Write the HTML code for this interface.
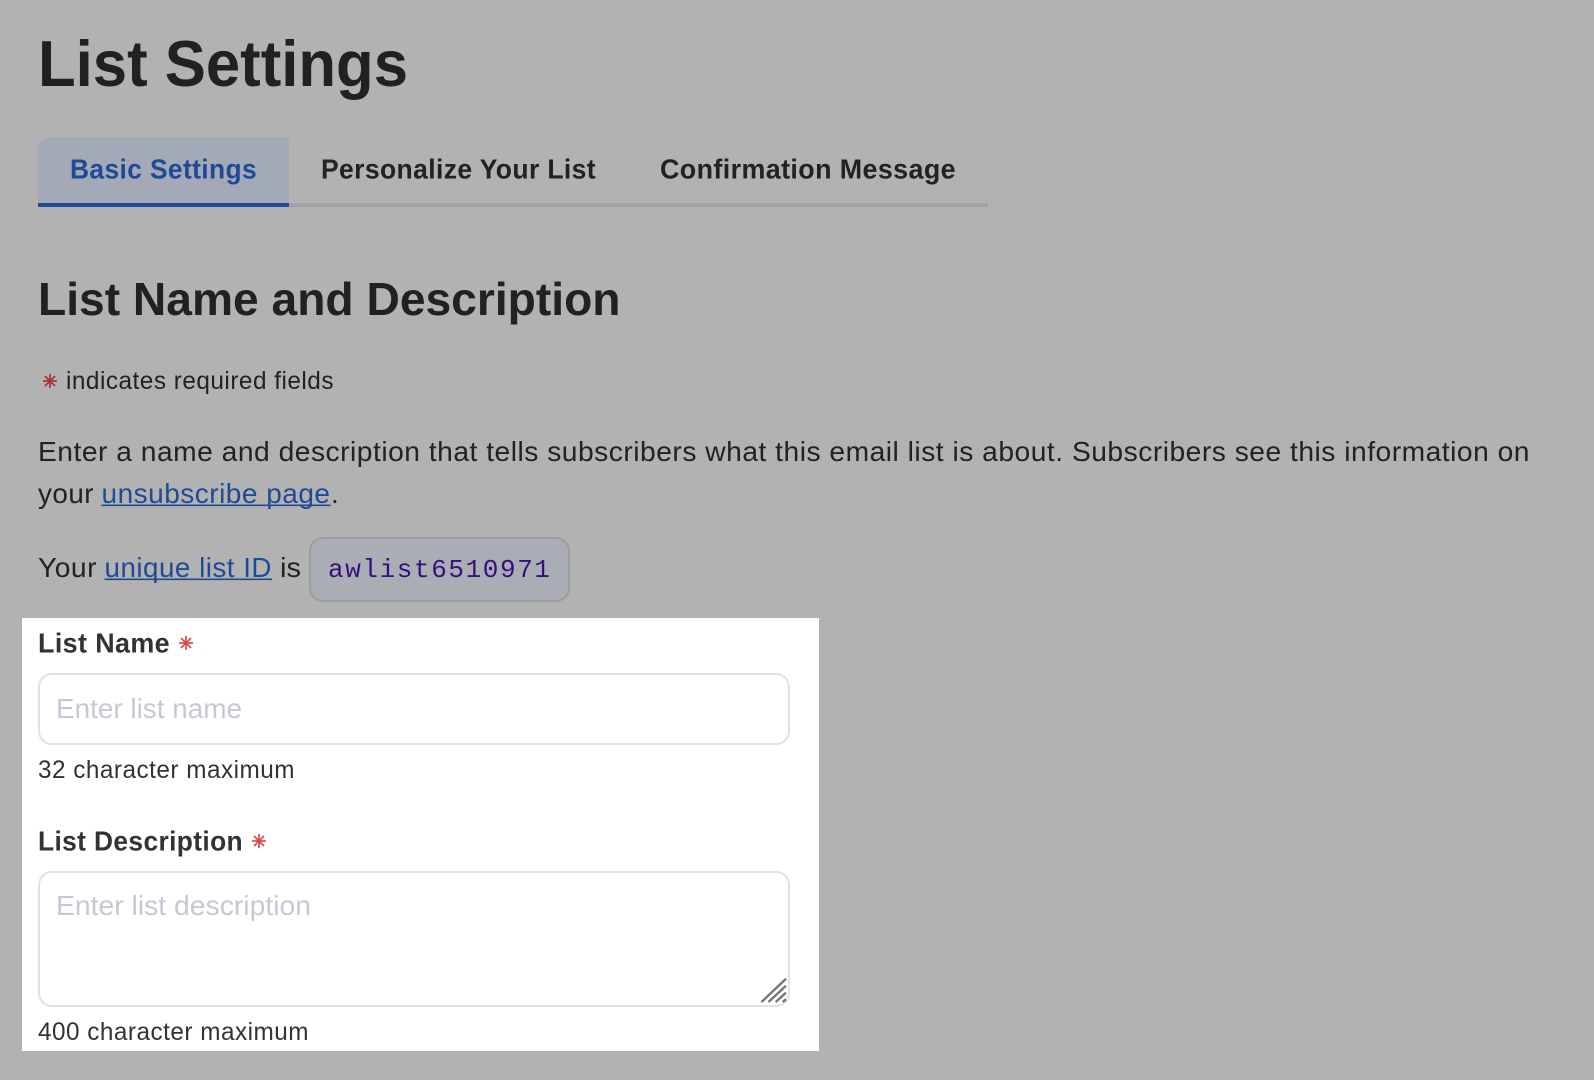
<!DOCTYPE html>
<html lang="en">
<head>
<meta charset="utf-8">
<title>List Settings</title>
<style>
html,body{margin:0;padding:0;background:#b2b2b2;width:1594px;height:1080px;overflow:hidden}
svg{display:block;position:absolute;left:0;top:0}
text{font-family:"Liberation Sans",Arial,sans-serif;white-space:pre}
.b{font-weight:700}
.s{letter-spacing:.5px}
.t{letter-spacing:.4px}
</style>
</head>
<body>
<svg width="1594" height="1080" viewBox="0 0 1594 1080" xmlns="http://www.w3.org/2000/svg">
<defs>
<g id="star" stroke-width="1.7" stroke-linecap="butt">
<line x1="0" y1="-7" x2="0" y2="7"/>
<line x1="-7" y1="0" x2="7" y2="0"/>
<line x1="-5" y1="-5" x2="5" y2="5"/>
<line x1="-5" y1="5" x2="5" y2="-5"/>
</g>
</defs>
<rect width="1594" height="1080" fill="#b2b2b2"/>

<text class="b" x="38" y="86" font-size="65" fill="#212121" textLength="370" lengthAdjust="spacingAndGlyphs">List Settings</text>

<!-- Tabs -->
<path d="M38 204V149a12 12 0 0 1 12-12H289V204Z" fill="#a3a9b6"/>
<rect x="38" y="203" width="950" height="4" fill="#a0a2aa"/>
<rect x="38" y="203" width="251" height="4" fill="#1e4a97"/>
<text class="b t" x="70" y="178.7" font-size="28" fill="#1f4a98" textLength="187" lengthAdjust="spacingAndGlyphs">Basic Settings</text>
<text class="b t" x="321" y="178.7" font-size="28" fill="#222" textLength="275" lengthAdjust="spacingAndGlyphs">Personalize Your List</text>
<text class="b t" x="660" y="178.7" font-size="28" fill="#222" textLength="296" lengthAdjust="spacingAndGlyphs">Confirmation Message</text>

<text class="b" x="38" y="315" font-size="46" fill="#212121" textLength="582.5" lengthAdjust="spacingAndGlyphs">List Name and Description</text>

<use href="#star" x="50" y="381" stroke="#a83232"/>
<text class="s" x="66" y="389.2" font-size="25" fill="#222" textLength="268" lengthAdjust="spacingAndGlyphs">indicates required fields</text>

<text class="s" x="38" y="461" font-size="28" fill="#222" textLength="1492" lengthAdjust="spacingAndGlyphs">Enter a name and description that tells subscribers what this email list is about. Subscribers see this information on</text>
<text class="s" x="38" y="503" font-size="28" fill="#222" textLength="56" lengthAdjust="spacingAndGlyphs">your</text>
<text class="s" x="101.5" y="503" font-size="28" fill="#1f4a98" textLength="229" lengthAdjust="spacingAndGlyphs">unsubscribe page</text>
<rect x="101.5" y="504.5" width="229" height="1.6" fill="#1f4a98"/>
<text x="331" y="503" font-size="28" fill="#222">.</text>

<text class="s" x="38" y="577" font-size="28" fill="#222" textLength="59" lengthAdjust="spacingAndGlyphs">Your</text>
<text class="s" x="104.5" y="577" font-size="28" fill="#1f4a98" textLength="167.5" lengthAdjust="spacingAndGlyphs">unique list ID</text>
<rect x="104.5" y="578.5" width="167.5" height="1.6" fill="#1f4a98"/>
<text x="280" y="577" font-size="28" fill="#222" textLength="21" lengthAdjust="spacingAndGlyphs">is</text>

<rect x="310" y="538" width="259" height="63" rx="13" fill="#abadb5" stroke="#9b9da6" stroke-width="2"/>
<text x="328" y="577" font-size="26" fill="#35107c" style="font-family:'Liberation Mono',monospace" textLength="222" lengthAdjust="spacing">awlist6510971</text>

<!-- White form panel -->
<rect x="22" y="618" width="797" height="433" fill="#ffffff"/>

<text class="b t" x="38" y="652.7" font-size="28" fill="#333" textLength="132" lengthAdjust="spacingAndGlyphs">List Name</text>
<use href="#star" x="186" y="643" stroke="#d94a4a"/>
<rect x="39" y="674" width="750" height="70" rx="13" fill="#fff" stroke="#e0e1e6" stroke-width="2"/>
<text x="56" y="718" font-size="28" fill="#c6c8d6" textLength="186" lengthAdjust="spacingAndGlyphs">Enter list name</text>
<text class="s" x="38" y="778.2" font-size="25" fill="#333" textLength="257" lengthAdjust="spacingAndGlyphs">32 character maximum</text>

<text class="b t" x="38" y="850.7" font-size="28" fill="#333" textLength="205" lengthAdjust="spacingAndGlyphs">List Description</text>
<use href="#star" x="259" y="841" stroke="#d94a4a"/>
<rect x="39" y="872" width="750" height="134" rx="13" fill="#fff" stroke="#e0e1e6" stroke-width="2"/>
<text x="56" y="915" font-size="28" fill="#c6c8d6" textLength="255" lengthAdjust="spacingAndGlyphs">Enter list description</text>
<g stroke="#777" stroke-width="2.4">
<line x1="761.5" y1="1002" x2="786" y2="978.7"/>
<line x1="768.5" y1="1002" x2="786" y2="985.7"/>
<line x1="775.7" y1="1002" x2="786" y2="992.7"/>
<line x1="782.7" y1="1002" x2="786" y2="999.2"/>
</g>
<text class="s" x="38" y="1040.2" font-size="25" fill="#333" textLength="271" lengthAdjust="spacingAndGlyphs">400 character maximum</text>
</svg>
</body>
</html>
